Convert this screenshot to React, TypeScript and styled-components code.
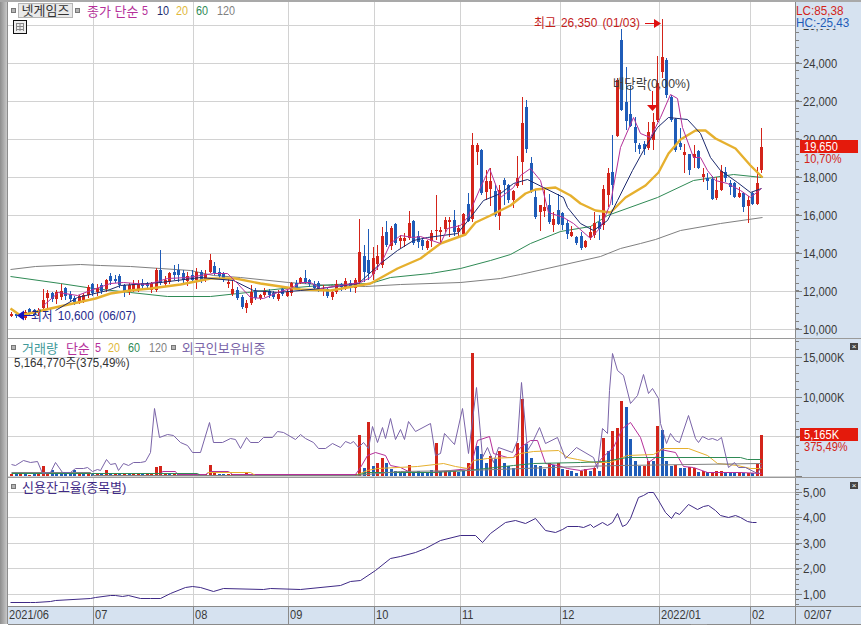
import styled, { createGlobalStyle } from 'styled-components'

type Candle = [number, number, number, number]

const RED = '#d3241a'
const BLUE = '#1f5cb8'
const MAGENTA = '#b5309a'
const NAVY = '#1c2a6e'
const GOLD = '#e6b02e'
const GREEN = '#2f8a55'
const GRAY = '#808080'
const PURPLE = '#7a64a8'
const FONT = '"Liberation Sans", "Noto Sans CJK KR", sans-serif'

// high, open, close, low in page pixels: red when close sits above open
const candles: Candle[] = [
  [312, 316, 314, 317], [312, 314, 316, 318], [314, 316, 314, 318], [310, 318, 312, 320], [308, 309, 313, 315],
  [309, 310, 315, 316], [308, 313, 310, 316], [289, 308, 300, 312], [290, 298, 293, 310], [292, 293, 299, 302],
  [290, 299, 292, 304], [284, 297, 291, 300], [287, 288, 296, 300], [291, 294, 299, 302], [296, 298, 302, 305],
  [295, 302, 296, 304], [293, 300, 295, 303], [285, 295, 287, 298], [283, 284, 293, 296], [284, 292, 288, 296],
  [283, 285, 291, 294], [279, 289, 280, 292], [273, 276, 281, 285], [275, 279, 281, 283], [274, 276, 285, 288],
  [284, 285, 292, 297], [283, 292, 285, 295], [280, 290, 284, 292], [280, 289, 284, 292], [279, 283, 286, 289],
  [282, 284, 286, 290], [282, 290, 283, 293], [268, 290, 270, 292], [250, 270, 283, 285], [276, 284, 280, 286],
  [272, 282, 273, 284], [265, 272, 275, 280], [264, 270, 275, 282], [270, 273, 280, 285], [272, 281, 276, 286],
  [270, 275, 280, 282], [268, 280, 272, 289], [270, 272, 280, 283], [270, 280, 274, 282], [254, 272, 260, 273],
  [262, 266, 273, 275], [268, 272, 276, 278], [272, 274, 280, 282], [278, 284, 282, 288], [280, 294, 289, 296],
  [287, 290, 298, 300], [295, 297, 307, 309], [300, 308, 303, 313], [285, 303, 292, 305], [288, 291, 298, 300],
  [294, 298, 295, 300], [288, 295, 291, 297], [289, 291, 295, 298], [291, 293, 297, 299], [290, 299, 294, 301],
  [286, 289, 294, 296], [290, 296, 292, 297], [282, 293, 283, 296], [280, 283, 288, 290], [277, 283, 278, 284],
  [270, 278, 282, 284], [279, 280, 284, 287], [281, 284, 288, 290], [281, 283, 290, 292], [285, 291, 290, 296],
  [287, 289, 296, 298], [290, 297, 292, 300], [280, 292, 284, 294], [283, 284, 287, 291], [278, 288, 281, 290],
  [280, 283, 288, 292], [278, 288, 280, 293], [219, 282, 252, 284], [245, 256, 272, 282], [229, 260, 273, 280],
  [247, 274, 258, 280], [245, 264, 256, 270], [227, 265, 236, 268], [221, 232, 245, 247], [226, 246, 228, 250],
  [223, 224, 243, 245], [235, 241, 238, 248], [233, 241, 238, 247], [211, 238, 223, 240], [220, 221, 243, 245],
  [231, 236, 242, 248], [238, 240, 246, 250], [240, 248, 241, 250], [230, 241, 233, 247], [195, 231, 230, 240],
  [227, 232, 230, 242], [217, 229, 220, 232], [217, 222, 220, 237], [210, 220, 232, 236], [225, 232, 228, 238],
  [213, 234, 214, 236], [193, 204, 221, 222], [133, 219, 145, 222], [143, 152, 145, 165], [149, 150, 193, 195],
  [170, 192, 181, 200], [168, 189, 181, 206], [185, 191, 215, 217], [185, 216, 190, 230], [178, 180, 185, 205],
  [184, 185, 200, 203], [190, 200, 191, 208], [156, 186, 178, 188], [97, 162, 123, 185], [100, 107, 149, 153],
  [157, 163, 191, 193], [190, 197, 217, 219], [205, 212, 205, 231], [190, 211, 207, 217], [194, 205, 222, 224],
  [212, 225, 219, 232], [194, 210, 224, 225], [212, 213, 225, 230], [220, 223, 234, 239], [226, 236, 232, 237],
  [236, 237, 243, 245], [232, 236, 248, 250], [240, 247, 241, 248], [226, 237, 232, 240], [212, 235, 223, 238],
  [215, 222, 229, 240], [185, 225, 189, 230], [168, 195, 173, 207], [135, 172, 185, 205], [78, 136, 80, 137],
  [29, 40, 110, 111], [67, 102, 121, 130], [85, 114, 126, 127], [117, 127, 143, 152], [143, 145, 149, 154],
  [141, 144, 149, 155], [122, 148, 132, 150], [113, 140, 122, 150], [56, 120, 83, 122], [19, 72, 57, 78],
  [58, 60, 95, 98], [95, 97, 120, 122], [118, 119, 150, 152], [128, 143, 147, 150], [144, 155, 152, 173],
  [154, 154, 170, 175], [145, 158, 154, 168], [150, 151, 168, 169], [168, 177, 174, 182], [173, 178, 181, 190],
  [176, 179, 199, 200], [177, 198, 190, 200], [165, 190, 171, 191], [167, 172, 178, 182], [180, 183, 187, 195],
  [182, 183, 197, 198], [187, 197, 193, 198], [192, 193, 207, 212], [196, 206, 200, 223], [192, 193, 204, 205],
  [167, 204, 183, 205], [128, 170, 147, 173],
]

// bar heights, positive is red and negative is blue
const volumes = [
  2, -2, 2, -2, 1, -2, 2, 10, 3, -6, -4, -3, -4, -2, -6, 2, -2, 2, -2, 2, -2, 6, -2, 2, -2, 2, -2, 2, 2, -2, 2, 2,
  9, 10, 2, -2, 2, -2, -2, 2, -2, 2, -2, 2, 11, 3, -2, -2, 2, 2, -2, -2, 4, 2, -2, 2, -2, -2, 2, -2, 2, 2, -2, 2,
  -2, -2, 2, -2, -2, 2, -2, 2, -2, 2, 2, -2, 2, 41, -8, 54, -10, 13, 18, -13, -7, -5, -3, -4, 11, -4, -5, -4, -4, -6,
  33, -4, 5, -4, 5, -4, -6, 13, 123, -30, -22, -13, 20, -17, 25, -13, -10, -8, 33, 77, -32, -18, -11, -10, -7, 13,
  -11, 13, -7, 6, -5, -3, 5, 7, -5, 8, -5, 38, -25, 45, 48, 75, -69, -37, -15, -10, 10, 15, -15, 50, -46, -15, -10,
  11, -8, -8, 9, 8, -4, 5, -4, 4, 5, 5, -4, -4, -3, 4, -3, 3, -3, 12, 41,
]

const ma120 = [10, 269, 35, 266, 80, 264, 100, 265, 130, 266, 160, 268, 190, 270, 213, 275, 240, 277, 288, 282, 330, 285, 365, 286, 400, 284, 460, 282, 500, 278, 520, 274, 560, 265, 600, 256, 620, 248, 640, 243, 655, 239, 680, 230, 720, 223, 762, 217]
const ma60 = [10, 276, 60, 283, 93, 288, 130, 292, 167, 296, 210, 296, 247, 292, 283, 288, 333, 284, 370, 283, 390, 277, 430, 273, 460, 268, 490, 260, 510, 254, 530, 243, 560, 231, 590, 226, 607, 215, 657, 197, 693, 180, 733, 174, 762, 177]
const ma20 = [10, 308, 20, 315, 50, 308, 95, 298, 110, 293, 130, 290, 150, 288, 180, 284, 210, 278, 235, 278, 260, 283, 280, 286, 300, 289, 330, 290, 370, 283, 397, 268, 420, 258, 440, 243, 465, 234, 475, 222, 490, 215, 510, 205, 525, 193, 535, 189, 555, 187, 570, 195, 580, 203, 595, 210, 610, 212, 625, 197, 645, 185, 658, 172, 668, 153, 680, 139, 695, 130, 705, 130, 715, 138, 735, 148, 750, 165, 762, 177]
const ma10 = [55, 310, 77, 297, 107, 290, 120, 285, 160, 282, 200, 277, 233, 280, 253, 290, 277, 292, 300, 290, 320, 288, 358, 283, 380, 263, 397, 250, 413, 240, 427, 237, 457, 233, 470, 217, 483, 200, 500, 193, 513, 183, 527, 179, 543, 187, 563, 197, 567, 207, 580, 223, 593, 230, 607, 220, 617, 200, 632, 170, 643, 150, 657, 127, 668, 117, 687, 119, 700, 133, 710, 157, 720, 170, 737, 182, 750, 192, 761, 188]
const ma5 = [43, 305, 58, 292, 77, 295, 90, 290, 110, 283, 123, 282, 147, 284, 167, 278, 187, 277, 213, 273, 227, 273, 237, 283, 250, 297, 263, 298, 277, 292, 290, 288, 300, 282, 310, 282, 320, 288, 360, 282, 370, 277, 382, 260, 390, 243, 400, 235, 413, 237, 420, 236, 440, 243, 447, 228, 460, 225, 467, 217, 480, 187, 489, 168, 500, 197, 513, 187, 520, 175, 530, 168, 540, 180, 548, 212, 563, 217, 573, 223, 590, 238, 600, 227, 610, 203, 620, 147, 633, 117, 640, 133, 650, 137, 660, 117, 670, 94, 677, 98, 682, 127, 693, 157, 700, 157, 707, 170, 715, 180, 727, 183, 740, 190, 750, 197, 761, 188]

const foreign = [11, 464, 15, 465, 23, 460, 30, 462, 37, 461, 42, 473, 50, 472, 55, 462, 62, 472, 70, 472, 75, 468, 83, 468, 87, 467, 92, 471, 97, 469, 100, 470, 106, 459, 110, 464, 115, 463, 118, 470, 123, 463, 128, 465, 133, 462, 140, 462, 145, 461, 150, 452, 154, 408, 159, 437, 167, 434, 173, 435, 180, 442, 187, 445, 192, 452, 200, 452, 209, 422, 213, 442, 222, 442, 230, 438, 235, 439, 240, 448, 246, 437, 250, 442, 258, 442, 263, 437, 272, 437, 277, 431, 283, 432, 295, 439, 300, 434, 305, 438, 313, 442, 318, 448, 325, 448, 332, 443, 340, 447, 345, 441, 350, 443, 353, 441, 358, 447, 363, 442, 368, 448, 372, 426, 377, 442, 382, 427, 385, 438, 390, 418, 395, 439, 400, 429, 404, 439, 408, 421, 415, 431, 430, 423, 435, 455, 440, 453, 444, 433, 454, 444, 462, 408, 468, 453, 476, 387, 482, 457, 487, 447, 493, 462, 498, 447, 512, 452, 517, 440, 521, 382, 527, 450, 532, 442, 539, 427, 545, 443, 557, 437, 565, 458, 576, 447, 593, 457, 597, 468, 602, 428, 607, 433, 609, 390, 612, 353, 617, 370, 623, 375, 630, 403, 637, 395, 643, 374, 648, 393, 652, 388, 658, 398, 660, 423, 666, 443, 670, 433, 675, 440, 679, 442, 688, 415, 695, 438, 698, 442, 702, 436, 708, 439, 712, 438, 717, 440, 721, 437, 728, 467, 734, 462, 738, 467, 745, 467, 757, 473, 761, 465]
const volMa5 = [160, 474, 162, 471, 175, 471, 177, 474, 205, 474, 210, 471, 228, 471, 232, 474, 355, 474, 360, 467, 367, 455, 375, 452, 385, 455, 390, 465, 400, 467, 410, 472, 430, 472, 470, 468, 477, 440, 489, 436, 493, 453, 507, 457, 513, 457, 520, 447, 530, 440, 537, 440, 545, 463, 557, 465, 567, 468, 580, 470, 593, 468, 602, 457, 613, 447, 622, 428, 630, 422, 640, 437, 648, 462, 655, 457, 660, 449, 675, 452, 683, 466, 693, 467, 707, 472, 740, 472, 761, 473]
const volMa20 = [207, 472, 250, 472, 255, 475, 355, 475, 367, 470, 377, 468, 417, 466, 443, 463, 455, 466, 467, 468, 473, 460, 487, 458, 513, 457, 520, 453, 533, 451, 558, 450, 567, 457, 577, 459, 593, 462, 610, 462, 627, 455, 653, 454, 663, 448, 688, 448, 707, 455, 717, 463, 737, 465, 750, 468, 761, 468]
const volMa60 = [11, 473, 197, 473, 200, 475, 355, 475, 367, 472, 433, 472, 467, 470, 513, 465, 533, 463, 580, 462, 603, 461, 627, 457, 740, 457, 747, 459, 761, 459]
const volMa120 = [11, 472, 90, 472, 92, 475, 355, 475, 400, 471, 467, 470, 580, 466, 620, 465, 761, 463]

const credit = [10, 602, 30, 602, 35, 602, 50, 601, 55, 600, 90, 598, 95, 597, 110, 595, 115, 595, 122, 596, 128, 595, 140, 598, 150, 598, 160, 598, 170, 593, 185, 587, 192, 586, 200, 587, 213, 591, 223, 588, 263, 589, 270, 588, 300, 589, 340, 585, 350, 581, 360, 580, 375, 570, 390, 558, 400, 556, 415, 552, 425, 548, 440, 540, 460, 535, 475, 535, 482, 542, 490, 533, 505, 522, 515, 520, 525, 523, 535, 518, 545, 530, 555, 532, 562, 529, 567, 526, 578, 526, 583, 527, 590, 524, 593, 527, 602, 522, 607, 525, 612, 522, 617, 513, 622, 526, 626, 524, 630, 518, 638, 497, 643, 495, 648, 492, 653, 492, 658, 500, 665, 512, 671, 518, 675, 512, 679, 514, 688, 504, 697, 509, 703, 506, 708, 505, 715, 510, 720, 515, 728, 517, 735, 515, 740, 517, 747, 521, 752, 522, 756, 522]

const gridX = [93, 193, 288, 374, 460, 560, 659, 750]
const candleX = (i: number) => Math.round(11 + i * 4.52)
const pts = (flat: number[]) => flat.map((v, i) => (i % 2 ? `${v + 0.5} ` : `${v + 0.5},`)).join('')

const GlobalStyle = createGlobalStyle`
  html, body {
    margin: 0;
    background: #fff;
  }
  body {
    font-family: ${FONT};
  }
`

const Window = styled.div`
  width: 861px;
  height: 625px;
  display: flex;
  box-sizing: border-box;
  border-top: 2px solid #a9a9a9;
  overflow: hidden;
  position: relative;
`

const SideBar = styled.div`
  width: 7px;
  flex-shrink: 0;
  height: 622px;
  background: linear-gradient(90deg, #8e8e8e, #a8a8a8 45%, #c8c8c8);
  border-right: 1px solid #8c8c8c;
`

const Charts = styled.div`
  width: 853px;
  display: flex;
  flex-direction: column;
`

const Pane = styled.section<{ $height: number; $line?: boolean }>`
  height: ${p => p.$height}px;
  flex-shrink: 0;
  box-sizing: border-box;
  display: grid;
  grid-template-columns: 787px 66px;
  border-bottom: ${p => (p.$line ? '1px solid #9a9a9a' : 'none')};
`

const Plot = styled.div`
  position: relative;
  background: #fff;
  min-width: 0;
`

const Axis = styled.div`
  position: relative;
  background: #d6e2f0;
  border-left: 1px solid #8a8a8a;
  box-sizing: border-box;
  color: #3a3a3a;
`

const Drawing = styled.svg`
  display: block;
`

const Legend = styled.div`
  position: absolute;
  left: 3px;
  top: 1px;
  display: flex;
  flex-direction: column;
  align-items: flex-start;
  gap: 2px;
`

const LegendRow = styled.div`
  display: flex;
  align-items: center;
  height: 15px;
  font-size: 13px;
  white-space: nowrap;
`

const Marker = styled.i<{ $gap: number }>`
  width: 3px;
  height: 3px;
  background: #b4b4b4;
  border: 1px solid #777;
  box-sizing: content-box;
  margin-right: ${p => p.$gap}px;
  flex-shrink: 0;
`

const StockButton = styled.button`
  width: 55px;
  height: 15px;
  padding: 0;
  margin-right: 2px;
  background: #e9e9e9;
  border: 1px solid #b5b5b5;
  font: inherit;
  color: #333;
  line-height: 13px;
`

const Series = styled.span<{ $color: string; $gap?: number }>`
  color: ${p => p.$color};
  margin-right: ${p => p.$gap ?? 0}px;
`

// latin glyphs of the old bitmap font are about 6px wide, so squeeze ours to that
const Digits = styled.span<{ $color: string; $chars: number; $gap?: number }>`
  display: inline-block;
  width: ${p => p.$chars * 6}px;
  margin-right: ${p => p.$gap ?? 0}px;
  color: ${p => p.$color};
  transform: scaleX(0.83);
  transform-origin: left center;
`

const Squeezed = styled.span<{ $scale?: number }>`
  display: inline-block;
  transform: scaleX(${p => p.$scale ?? 0.85});
  transform-origin: left center;
  white-space: nowrap;
`

const Readout = styled.div`
  font-size: 13px;
  line-height: 13px;
  color: #333;
  margin: -1px 0 0 3px;
`

const TableButton = styled.svg`
  display: block;
  margin-left: 2px;
`

const Ratio = styled.div<{ $top: number; $color: string }>`
  position: absolute;
  left: 0;
  top: ${p => p.$top}px;
  width: 62px;
  font-size: 13px;
  line-height: 12px;
  color: ${p => p.$color};
  white-space: nowrap;
  background: #d6e2f0;
`

const Tag = styled.div<{ $top: number }>`
  position: absolute;
  left: 4px;
  top: ${p => p.$top}px;
  width: 58px;
  height: 13px;
  background: #e41a0c;
  color: #fff;
  font-size: 13px;
  line-height: 13px;
  padding-left: 4px;
  box-sizing: border-box;
`

const TagNote = styled.div<{ $top: number }>`
  position: absolute;
  left: 8px;
  top: ${p => p.$top}px;
  font-size: 13px;
  line-height: 12px;
  color: #d3241a;
`

const CloseButton = styled.div<{ $top: number }>`
  position: absolute;
  left: 54px;
  top: ${p => p.$top}px;
  width: 8px;
  height: 7px;
  background: #444;
  color: #fff;
  font-size: 8px;
  line-height: 7px;
  text-align: center;
`

const DateBar = styled.div`
  height: 19px;
  width: 853px;
  display: flex;
  background: #d6e2f0;
  border-top: 1px solid #8a8a8a;
  border-bottom: 1px solid #8a8a8a;
  box-sizing: border-box;
  font-size: 13px;
  color: #3a3a3a;
`

const DateCell = styled.div<{ $width: number; $indent?: number }>`
  width: ${p => p.$width}px;
  flex-shrink: 0;
  box-sizing: border-box;
  padding-left: ${p => p.$indent ?? 1}px;
  border-right: 1px solid #8a8a8a;
  line-height: 16px;
  &:last-child {
    border-right: none;
  }
`

const Grip = styled.div`
  position: absolute;
  left: 691px;
  bottom: 0;
  width: 16px;
  height: 1px;
  background: #999;
`

const ChartLabel = styled.text<{ $color: string }>`
  font-family: ${FONT};
  font-size: 13px;
  word-spacing: 2px;
  fill: ${p => p.$color};
`

const AxisLabel = styled.text`
  font-family: ${FONT};
  font-size: 13px;
  fill: #3a3a3a;
`

const Grid = ({ lines, top, bottom }: { lines: number[]; top: number; bottom: number }) => (
  <g stroke="#d2d2d2" strokeWidth={1} shapeRendering="crispEdges">
    {lines.map(y => (
      <line key={y} x1={8} x2={795} y1={y + 0.5} y2={y + 0.5} />
    ))}
    {gridX.map(x => (
      <line key={x} x1={x + 0.5} x2={x + 0.5} y1={top} y2={bottom} />
    ))}
  </g>
)

const Line = ({ data, color, width = 1 }: { data: number[]; color: string; width?: number }) => (
  <polyline points={pts(data)} fill="none" stroke={color} strokeWidth={width} strokeLinejoin="round" />
)

const Candles = () => (
  <g shapeRendering="crispEdges">
    {candles.map(([high, open, close, low], i) => {
      const x = candleX(i)
      const color = close < open ? RED : BLUE
      const top = Math.min(open, close)
      return (
        <g key={i} fill={color}>
          <rect x={x} y={high} width={1} height={low - high} />
          <rect x={x - 1} y={top} width={3} height={Math.max(Math.abs(open - close), 1)} />
        </g>
      )
    })}
  </g>
)

const VolumeBars = () => (
  <g shapeRendering="crispEdges">
    {volumes.map((v, i) => (
      <rect key={i} x={candleX(i) - 1} y={476 - Math.abs(v)} width={3} height={Math.abs(v)} fill={v > 0 ? RED : BLUE} />
    ))}
  </g>
)

const Ticks = ({ major, minor, x = 796 }: { major: number[]; minor: number[]; x?: number }) => (
  <g stroke="#808080" strokeWidth={1} shapeRendering="crispEdges">
    {major.map(y => (
      <line key={y} x1={x} x2={x + 6} y1={y + 0.5} y2={y + 0.5} />
    ))}
    {minor.map(y => (
      <line key={y} x1={x} x2={x + 3} y1={y + 0.5} y2={y + 0.5} />
    ))}
  </g>
)

const Scale = ({ items, perChar = 5.7 }: { items: [string, number][]; perChar?: number }) => (
  <>
    {items.map(([label, y]) => (
      <AxisLabel key={label} x={803} y={y + 5} textLength={label.length * perChar} lengthAdjust="spacingAndGlyphs">
        {label}
      </AxisLabel>
    ))}
  </>
)

const range = (from: number, to: number, step: number) => {
  const out: number[] = []
  for (let v = from; v <= to; v += step) out.push(Math.round(v))
  return out
}

const PricePane = () => (
  <Pane $height={337} $line>
    <Plot>
      <Drawing width={787} height={336} viewBox="8 2 787 336">
        <Grid lines={[25, 63, 101, 139, 177, 215, 253, 291, 329]} top={2} bottom={338} />
        <Line data={ma120} color={GRAY} />
        <Line data={ma60} color={GREEN} />
        <Candles />
        <Line data={ma20} color={GOLD} width={2.4} />
        <Line data={ma10} color={NAVY} />
        <Line data={ma5} color={MAGENTA} />
        <ChartLabel $color="#c4201a" x={534} y={27} textLength={106} lengthAdjust="spacingAndGlyphs">최고 26,350 (01/03)</ChartLabel>
        <path d="M645 23.5h10" stroke="#e01010" fill="none" />
        <path d="M654 19l7 4.5-7 4.5z" fill="#e01010" />
        <ChartLabel $color="#3c3c3c" x={613} y={88} textLength={77} lengthAdjust="spacingAndGlyphs">배당락(0,00%)</ChartLabel>
        <path d="M652.5 91v15" stroke="#e01010" fill="none" />
        <path d="M647 105h11l-5.500 6z" fill="#e01010" />
        <path d="M24 315.500h10" stroke="#1414c0" fill="none" />
        <path d="M17 315.500l7-5v10z" fill="#1414c0" />
        <ChartLabel $color="#1f2a8c" x={31} y={320} textLength={105} lengthAdjust="spacingAndGlyphs">최저 10,600 (06/07)</ChartLabel>
      </Drawing>
      <Legend>
        <LegendRow>
          <Marker $gap={2} />
          <StockButton>넷게임즈</StockButton>
          <Marker $gap={7} />
          <Series $color={MAGENTA} $gap={4}>종가 단순</Series>
          <Digits $color={MAGENTA} $chars={1} $gap={9}>5</Digits>
          <Digits $color={NAVY} $chars={2} $gap={7}>10</Digits>
          <Digits $color="#e0b83c" $chars={2} $gap={8}>20</Digits>
          <Digits $color={GREEN} $chars={2} $gap={9}>60</Digits>
          <Digits $color={GRAY} $chars={3}>120</Digits>
        </LegendRow>
        <TableButton width={14} height={14} viewBox="0 0 14 14">
          <rect x={0.5} y={0.5} width={13} height={13} fill="#eee" stroke="#111" />
          <path d="M3 3.500h8M3 6.500h8M3 9.500h8M3.500 3v8M7 3v8M10.500 3v8" stroke="#888" fill="none" />
        </TableButton>
      </Legend>
    </Plot>
    <Axis>
      <Drawing width={65} height={336} viewBox="796 2 65 336">
        <Ticks major={[63, 101, 139, 177, 215, 253, 291, 329]} minor={range(32, 336, 7.6)} />
        <Scale items={[['26,000', 25], ['24,000', 63], ['22,000', 101], ['20,000', 139], ['18,000', 177], ['16,000', 215], ['14,000', 253], ['12,000', 291], ['10,000', 329]]} />
      </Drawing>
      <Ratio $top={3} $color="#d3241a"><Squeezed $scale={0.9}>LC:85,38</Squeezed></Ratio>
      <Ratio $top={15} $color="#1f5cb8"><Squeezed $scale={0.9}>HC:-25,43</Squeezed></Ratio>
      <Tag $top={138}><Squeezed>19,650</Squeezed></Tag>
      <TagNote $top={151}><Squeezed>10,70%</Squeezed></TagNote>
    </Axis>
  </Pane>
)

const VolumePane = () => (
  <Pane $height={139} $line>
    <Plot>
      <Drawing width={787} height={138} viewBox="8 339 787 138">
        <Grid lines={[357, 397, 436]} top={339} bottom={477} />
        <VolumeBars />
        <Line data={volMa5} color={MAGENTA} />
        <Line data={volMa20} color={GOLD} />
        <Line data={volMa60} color={GREEN} />
        <Line data={volMa120} color={GRAY} />
        <Line data={foreign} color={PURPLE} />
        <path d="M8 476.500h787" stroke="#d2d2d2" shapeRendering="crispEdges" />
      </Drawing>
      <Legend>
        <LegendRow>
          <Marker $gap={6} />
          <Series $color="#3f9a9a" $gap={8}>거래량</Series>
          <Series $color={MAGENTA} $gap={5}>단순</Series>
          <Digits $color={MAGENTA} $chars={1} $gap={7}>5</Digits>
          <Digits $color="#e0b83c" $chars={2} $gap={8}>20</Digits>
          <Digits $color={GREEN} $chars={2} $gap={9}>60</Digits>
          <Digits $color={GRAY} $chars={3} $gap={4}>120</Digits>
          <Marker $gap={6} />
          <Series $color={PURPLE}>외국인보유비중</Series>
        </LegendRow>
        <Readout><Squeezed $scale={0.89}>5,164,770주(375,49%)</Squeezed></Readout>
      </Legend>
    </Plot>
    <Axis>
      <Drawing width={65} height={138} viewBox="796 339 65 138">
        <Ticks major={[357, 397, 436, 476]} minor={range(341, 476, 8)} />
        <Scale perChar={5.9} items={[['15,000K', 357], ['10,000K', 397]]} />
      </Drawing>
      <Tag $top={89}><Squeezed>5,165K</Squeezed></Tag>
      <TagNote $top={102}><Squeezed>375,49%</Squeezed></TagNote>
      <CloseButton $top={4}>×</CloseButton>
    </Axis>
  </Pane>
)

const CreditPane = () => (
  <Pane $height={128}>
    <Plot>
      <Drawing width={787} height={128} viewBox="8 478 787 128">
        <Grid lines={[492, 517, 543, 568, 594]} top={478} bottom={606} />
        <Line data={credit} color="#3f2a86" />
      </Drawing>
      <Legend>
        <LegendRow>
          <Marker $gap={6} />
          <Series $color="#3f2a86">신용잔고율(종목별)</Series>
        </LegendRow>
      </Legend>
    </Plot>
    <Axis>
      <Drawing width={65} height={128} viewBox="796 478 65 128">
        <Ticks major={[492, 517, 543, 568, 594]} minor={range(484, 604, 5)} />
        <Scale items={[['5,00', 492], ['4,00', 517], ['3,00', 543], ['2,00', 568], ['1,00', 594]]} />
      </Drawing>
      <CloseButton $top={4}>×</CloseButton>
    </Axis>
  </Pane>
)

const App = () => (
  <>
    <GlobalStyle />
    <Window>
      <SideBar />
      <Charts>
        <PricePane />
        <VolumePane />
        <CreditPane />
        <DateBar>
          <DateCell $width={86}><Squeezed>2021/06</Squeezed></DateCell>
          <DateCell $width={100}><Squeezed>07</Squeezed></DateCell>
          <DateCell $width={95}><Squeezed>08</Squeezed></DateCell>
          <DateCell $width={86}><Squeezed>09</Squeezed></DateCell>
          <DateCell $width={86}><Squeezed>10</Squeezed></DateCell>
          <DateCell $width={100}><Squeezed>11</Squeezed></DateCell>
          <DateCell $width={99}><Squeezed>12</Squeezed></DateCell>
          <DateCell $width={91}><Squeezed>2022/01</Squeezed></DateCell>
          <DateCell $width={45}><Squeezed>02</Squeezed></DateCell>
          <DateCell $width={65} $indent={8}><Squeezed>02/07</Squeezed></DateCell>
        </DateBar>
      </Charts>
      <Grip />
    </Window>
  </>
)

export default App
